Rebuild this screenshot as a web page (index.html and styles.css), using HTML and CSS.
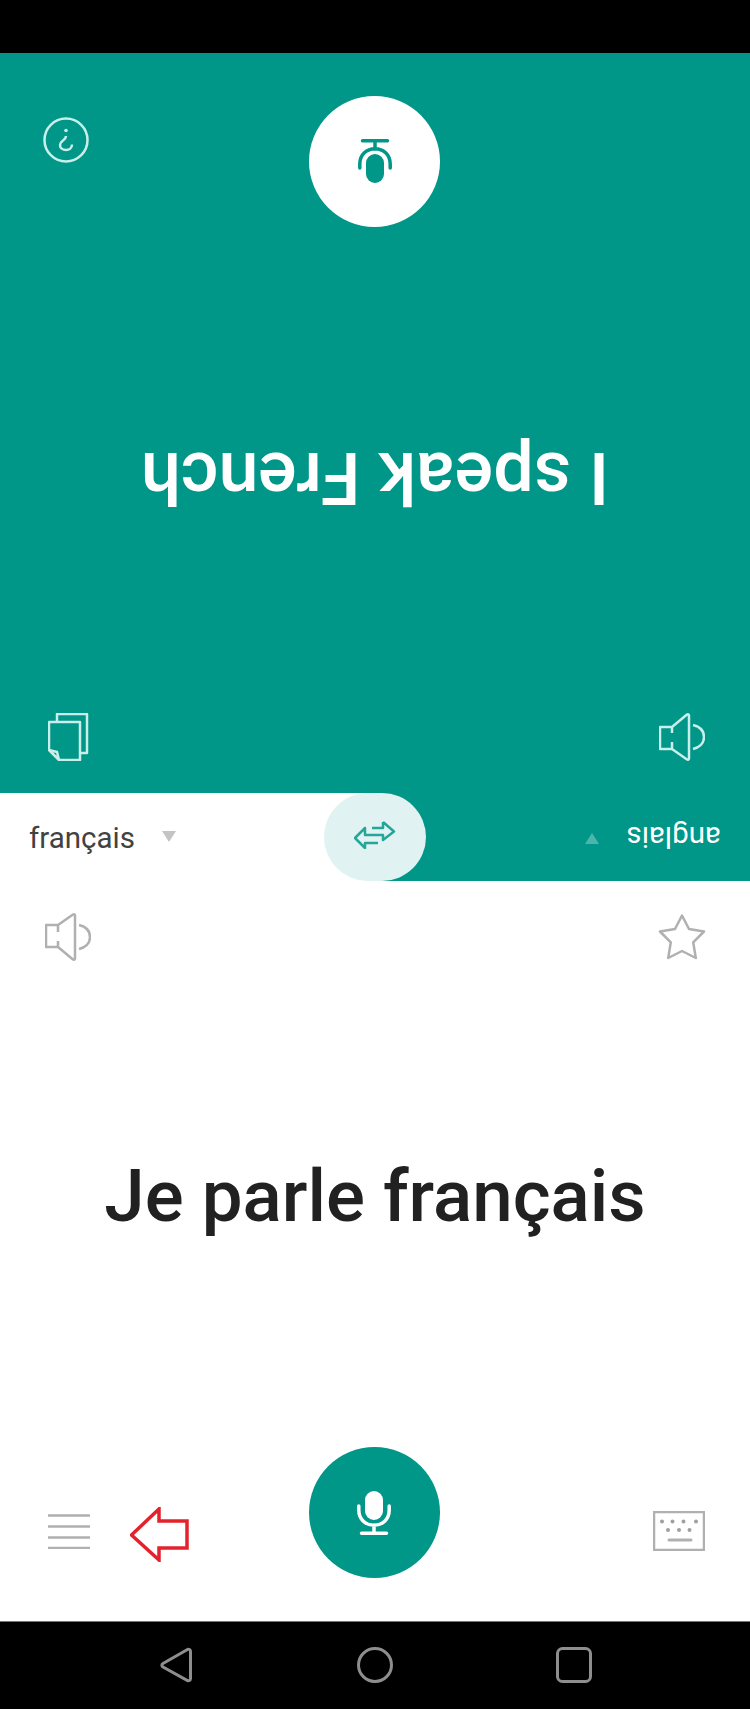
FILE: index.html
```html
<!DOCTYPE html>
<html lang="fr">
<head>
  <meta charset="UTF-8" />
  <meta name="viewport" content="width=device-width, initial-scale=1.0"/>
  <title>Traducteur</title>
  <link rel="stylesheet" href="styles.css">
</head>
<body>
  <div class="phone">
    <div class="status-bar"></div>

    <!-- top half is for the person opposite, so it is turned over -->
    <section class="panel panel-flipped">
      <div class="panel-top">
        <svg class="icon speaker" viewBox="0 0 46 48"><path d="M13 12H1v22h12M13 12 28 1.500c1-.5 2 0 2 1v43c0 1-1 1.500-2 1L13 34M13 12v7M13 28v6M34 12c8 2 11 7 11 12s-3 10-11 12"/></svg>
        <svg class="icon copy" viewBox="0 0 42 48"><path d="M9 9V1h30v39h-7"/><path d="M1 9h31v38H11L1 37zM1 37l8 2 2 8"/></svg>
      </div>
      <p class="phrase">I speak French</p>
      <div class="panel-bottom">
        <span class="side-slot"></span>
        <button class="talk talk-white">
          <svg viewBox="0 0 34 44"><rect class="mic-body" x="8" y="0" width="18" height="29" rx="9"/><path class="mic-arm" d="M1.800 15v4c0 9.500 7 15.200 15.200 15.200S32.200 28.500 32.200 19v-4M17 34v8M4.500 42.200h25"/></svg>
        </button>
        <span class="side-slot side-end">
          <svg class="icon info" viewBox="0 0 46 46"><circle cx="23" cy="23" r="21.500"/><path d="M17 18.500c0-3.500 2.700-5.500 6-5.500s6 2 6 5c0 4.500-6 4.500-6 9"/><circle class="dot" cx="23" cy="32.500" r="1.800"/></svg>
        </span>
      </div>
    </section>

    <div class="lang-bar">
      <div class="lang lang-here">
        <span class="lang-name">français</span>
        <span class="caret"></span>
      </div>
      <div class="lang lang-there">
        <span class="lang-name">anglais</span>
        <span class="caret"></span>
      </div>
      <button class="swap">
        <svg viewBox="0 0 42 28"><path d="M29 1 40 10.500 29 19v-5H11V7L1 17l10 10v-5h13M18 7h11V1"/></svg>
      </button>
    </div>

    <section class="panel">
      <div class="panel-top">
        <svg class="icon speaker" viewBox="0 0 46 48"><path d="M13 12H1v22h12M13 12 28 1.500c1-.5 2 0 2 1v43c0 1-1 1.500-2 1L13 34M13 12v7M13 28v6M34 12c8 2 11 7 11 12s-3 10-11 12"/></svg>
        <svg class="icon star" viewBox="0 0 48 46"><path d="M24 1.500 31 15l15 2.500-10.800 10.800L37.800 44 24 37 10.200 44l2.600-15.700L2 17.500 17 15z"/></svg>
      </div>
      <p class="phrase">Je parle français</p>
      <div class="panel-bottom">
        <span class="side-slot">
          <svg class="icon menu" viewBox="0 0 42 35"><path d="M0 1.500h42M0 12.500h42M0 23.500h42M0 34h42"/></svg>
        </span>
        <button class="talk">
          <svg viewBox="0 0 34 44"><rect class="mic-body" x="8" y="0" width="18" height="29" rx="9"/><path class="mic-arm" d="M1.800 15v4c0 9.500 7 15.200 15.200 15.200S32.200 28.500 32.200 19v-4M17 34v8M4.500 42.200h25"/></svg>
        </button>
        <span class="side-slot side-end">
          <svg class="icon keyboard" viewBox="0 0 52 40"><rect x="1" y="1" width="50" height="38"/><path class="keys" d="M9 10.500h.01M19.500 10.500h.01M30.500 10.500h.01M43 10.500h.01M15 19h.01M26 19h.01M36.500 19h.01"/><path class="space" d="M16 29h22"/></svg>
        </span>
      </div>
      <!-- annotation drawn over the screenshot -->
      <svg class="callout" viewBox="0 0 60 55"><path d="M1.500 28 29 2v12h28v27H29v12z"/></svg>
    </section>

    <nav class="nav-bar">
      <svg viewBox="0 0 32 36"><path d="M27.500 2.500 3 16.500c-1.500 1-1.500 2.500 0 3.500l24.500 13.500c1.500.5 3 0 3-2V4.500c0-2-1.500-2.500-3-2z"/></svg>
      <svg viewBox="0 0 36 36"><circle cx="18" cy="18" r="16.500"/></svg>
      <svg viewBox="0 0 36 36"><rect x="1.500" y="1.500" width="33" height="33" rx="5"/></svg>
    </nav>
  </div>
</body>
</html>
```
FILE: styles.css
```css
:root {
  --teal: #009688;
  --grey-icon: #b0b0b0;
  --pale-icon: #c8efe9;
}

* {
  box-sizing: border-box;
}

body {
  margin: 0;
  background: #fff;
  font-family: Roboto, sans-serif;
}

.phone {
  width: 750px;
  height: 1709px;
  display: flex;
  flex-direction: column;
}

.status-bar {
  height: 53px;
  background: #000;
}

.panel {
  position: relative;
  height: 740px;
  display: flex;
  flex-direction: column;
  background: #fff;
}

.panel-flipped {
  transform: rotate(180deg);
  background: var(--teal);
}

.panel-top {
  height: 80px;
  padding: 32px 44px 0 45px;
  display: flex;
  justify-content: space-between;
  align-items: flex-start;
}

.phrase {
  flex: 1;
  margin: 0;
  padding-bottom: 16px;
  display: flex;
  justify-content: center;
  align-items: center;
  font-size: 72.7px;
  font-weight: 500;
  color: #212121;
}

.panel-flipped .phrase {
  font-size: 72px;
  color: #fff;
}

.panel-bottom {
  height: 174px;
  padding: 0 45px 45px;
  display: grid;
  grid-template-columns: 1fr 131px 1fr;
  align-items: end;
}

.side-slot {
  height: 131px;
  padding-top: 36px;
  display: flex;
  align-items: center;
}

.panel-flipped .side-slot {
  padding-top: 42px;
}

.side-end {
  justify-content: flex-end;
}

.talk {
  width: 131px;
  height: 131px;
  margin-left: -1px;
  padding: 0;
  border: none;
  border-radius: 50%;
  background: var(--teal);
  display: flex;
  justify-content: center;
  align-items: center;
}

.talk svg {
  width: 34px;
  height: 44px;
}

.mic-body {
  fill: #fff;
}

.mic-arm {
  fill: none;
  stroke: #fff;
  stroke-width: 3.5px;
  stroke-linecap: round;
}

.talk-white {
  margin-left: 0;
  background: #fff;
}

.talk-white .mic-body {
  fill: var(--teal);
}

.talk-white .mic-arm {
  stroke: var(--teal);
}

.icon {
  display: block;
  fill: none;
  stroke: var(--grey-icon);
  stroke-width: 2.5px;
  stroke-linejoin: round;
}

.panel-flipped .icon {
  stroke: var(--pale-icon);
}

.speaker {
  width: 46px;
  height: 48px;
}

/* the turned panel keeps the cone pointing the same way */
.panel-flipped .speaker {
  transform: scaleX(-1);
}

.star {
  width: 48px;
  height: 46px;
  margin-top: 1px;
}

.copy {
  width: 42px;
  height: 48px;
  margin-right: 4px;
  transform: rotate(180deg);
}

.info {
  width: 46px;
  height: 46px;
  margin-right: -2px;
}

.info .dot {
  fill: var(--pale-icon);
  stroke: none;
}

.menu {
  width: 42px;
  height: 35px;
  margin: 2px 0 0 3px;
}

.keyboard {
  width: 52px;
  height: 40px;
}

.keyboard .keys {
  stroke: #a0a0a0;
  stroke-width: 4px;
  stroke-linecap: round;
}

.keyboard .space {
  stroke-width: 3px;
  stroke-linecap: round;
}

.lang-bar {
  position: relative;
  height: 88px;
  display: flex;
}

.lang {
  width: 50%;
  padding-left: 29px;
  display: flex;
  align-items: center;
  gap: 27px;
  font-size: 29.5px;
}

.lang-here {
  padding-top: 2px;
  background: #fff;
  color: #424242;
}

.lang-there {
  background: var(--teal);
  color: #fff;
  transform: rotate(180deg);
}

.caret {
  width: 0;
  height: 0;
  margin-bottom: 3px;
  border-left: 7.5px solid transparent;
  border-right: 7.5px solid transparent;
  border-top: 11px solid #c4c4c4;
}

.lang-there .caret {
  border-top-color: #4db6ac;
}

.swap {
  position: absolute;
  left: 324px;
  top: 0;
  width: 102px;
  height: 88px;
  padding: 0 0 4px;
  border: none;
  border-radius: 44px;
  background: #e0f2f1;
  display: flex;
  justify-content: center;
  align-items: center;
}

.swap svg {
  width: 42px;
  height: 28px;
  fill: none;
  stroke: #26a69a;
  stroke-width: 2.5px;
  stroke-linejoin: round;
}

.callout {
  position: absolute;
  left: 130px;
  top: 626px;
  width: 60px;
  height: 55px;
  fill: none;
  stroke: #e3232c;
  stroke-width: 3.5px;
}

.nav-bar {
  height: 88px;
  padding-bottom: 1px;
  border-top: 1px solid #777;
  background: #000;
  display: flex;
  justify-content: center;
  align-items: center;
  gap: 163px;
}

.nav-bar svg {
  width: 36px;
  height: 36px;
  fill: none;
  stroke: #8e8e8e;
  stroke-width: 3px;
}
```
